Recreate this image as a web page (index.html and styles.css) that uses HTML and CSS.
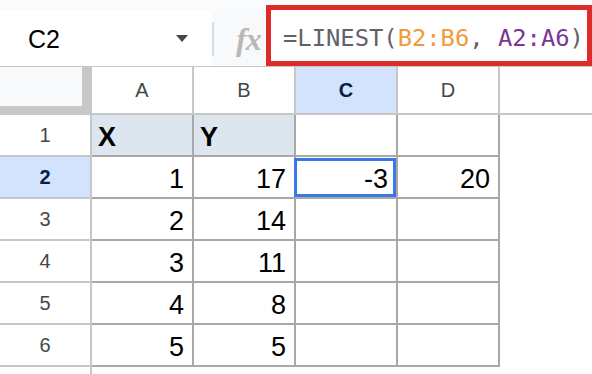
FILE: index.html
```html
<!DOCTYPE html>
<html lang="en">

<head>
    <meta charset="UTF-8">
    <meta name="viewport" content="width=device-width, initial-scale=1.0">
    <title>LINEST</title>
    <link rel="stylesheet" href="styles.css">
</head>

<body>

    <header class="toolbar">
        <div class="namebox">
            <span class="ref">C2</span>
            <svg class="caret" width="12" height="7" viewBox="0 0 12 7"><path d="M0 0h12L6 7z" fill="#444746"/></svg>
        </div>
        <div class="divider"></div>
        <div class="fx">fx</div>
        <div class="formula">
            <span class="fn">=LINEST(</span><span class="range1">B2:B6</span><span class="fn">, </span><span class="range2">A2:A6</span><span class="fn">)</span>
        </div>
    </header>

    <section class="sheet">
        <div class="corner"></div>
        <div class="colhead">A</div>
        <div class="colhead">B</div>
        <div class="colhead active">C</div>
        <div class="colhead">D</div>
        <div class="colhead blank"></div>

        <div class="rowhead">1</div>
        <div class="cell title">X</div>
        <div class="cell title">Y</div>
        <div class="cell"></div>
        <div class="cell"></div>
        <div class="empty"></div>

        <div class="rowhead active">2</div>
        <div class="cell">1</div>
        <div class="cell">17</div>
        <div class="cell selected">-3</div>
        <div class="cell">20</div>
        <div class="empty"></div>

        <div class="rowhead">3</div>
        <div class="cell">2</div>
        <div class="cell">14</div>
        <div class="cell"></div>
        <div class="cell"></div>
        <div class="empty"></div>

        <div class="rowhead">4</div>
        <div class="cell">3</div>
        <div class="cell">11</div>
        <div class="cell"></div>
        <div class="cell"></div>
        <div class="empty"></div>

        <div class="rowhead">5</div>
        <div class="cell">4</div>
        <div class="cell">8</div>
        <div class="cell"></div>
        <div class="cell"></div>
        <div class="empty"></div>

        <div class="rowhead">6</div>
        <div class="cell">5</div>
        <div class="cell">5</div>
        <div class="cell"></div>
        <div class="cell"></div>
        <div class="empty"></div>

        <div class="rowhead last"></div>
    </section>

</body>

</html>
```

FILE: styles.css
```css
* {
    box-sizing: border-box;
}

body {
    margin: 0;
    width: 592px;
    height: 374px;
    overflow: hidden;
    background-color: white;
    font-family: "Liberation Sans", Arial, sans-serif;
}

/* formula bar */

.toolbar {
    display: flex;
    height: 67px;
    background-color: #f9fbfd;
    border-bottom: 1px solid #c7c7c7;
}

.namebox {
    width: 212px;
    margin-top: 10px;
    background-color: white;
    display: flex;
    align-items: center;
    padding-left: 28px;
    padding-right: 24px;
}

.ref {
    font-size: 25px;
    color: #000;
    flex: 1;
    padding-top: 2px;
}

.caret {
    display: block;
    margin-top: 1px;
}

.divider {
    width: 2px;
    margin-top: 22px;
    height: 34px;
    background-color: #d6dee9;
}

.fx {
    width: 52px;
    margin-top: 10px;
    background-color: #f8f9fa;
    font-family: "Liberation Serif", serif;
    font-style: italic;
    font-weight: bold;
    font-size: 32px;
    color: #b8b8b8;
    padding-left: 22px;
    padding-top: 11px;
    letter-spacing: -1px;
}

.formula {
    flex: 1;
    margin-top: 5px;
    background-color: white;
    border: 5px solid #df2a2a;
    padding-left: 12px;
    padding-top: 14px;
    font-family: "DejaVu Sans Mono", monospace;
    font-size: 23.8px;
    white-space: nowrap;
}

.fn {
    color: #5f6368;
}

.range1 {
    color: #f29a35;
}

.range2 {
    color: #7b3595;
}

/* grid */

.sheet {
    display: grid;
    grid-template-columns: 92px repeat(4, 102px) 1fr;
    grid-template-rows: 48px repeat(6, 42px) 1fr;
    height: 307px;
}

.corner {
    background-color: #f8f9fa;
    border-right: 10px solid #c7c7c7;
    border-bottom: 9px solid #c7c7c7;
}

.colhead {
    border-right: 2px solid #c7c7c7;
    border-bottom: 2px solid #c7c7c7;
    text-align: center;
    font-size: 20px;
    line-height: 46px;
    color: #444746;
}

.colhead.blank {
    border-right: none;
}

.colhead.active {
    background-color: #d3e3fd;
    font-weight: bold;
    color: #041e49;
}

.rowhead {
    border-right: 2px solid #c7c7c7;
    border-bottom: 2px solid #c7c7c7;
    text-align: center;
    font-size: 20px;
    line-height: 40px;
    color: #444746;
}

.rowhead.active {
    background-color: #d3e3fd;
    font-weight: bold;
    color: #041e49;
}

.rowhead.last {
    border-bottom: none;
}

.cell {
    position: relative;
    border-right: 2px solid #a8a8a8;
    border-bottom: 2px solid #a8a8a8;
    text-align: right;
    padding-right: 8px;
    padding-top: 2px;
    font-size: 27px;
    line-height: 40px;
    color: #000;
}

.cell.title {
    background-color: #dde5ef;
    text-align: left;
    padding-left: 6px;
    font-weight: bold;
}

.selected::after {
    content: "";
    position: absolute;
    top: 1px;
    left: -2px;
    right: 0;
    bottom: 0;
    border: 3px solid #3b78e7;
}
```
